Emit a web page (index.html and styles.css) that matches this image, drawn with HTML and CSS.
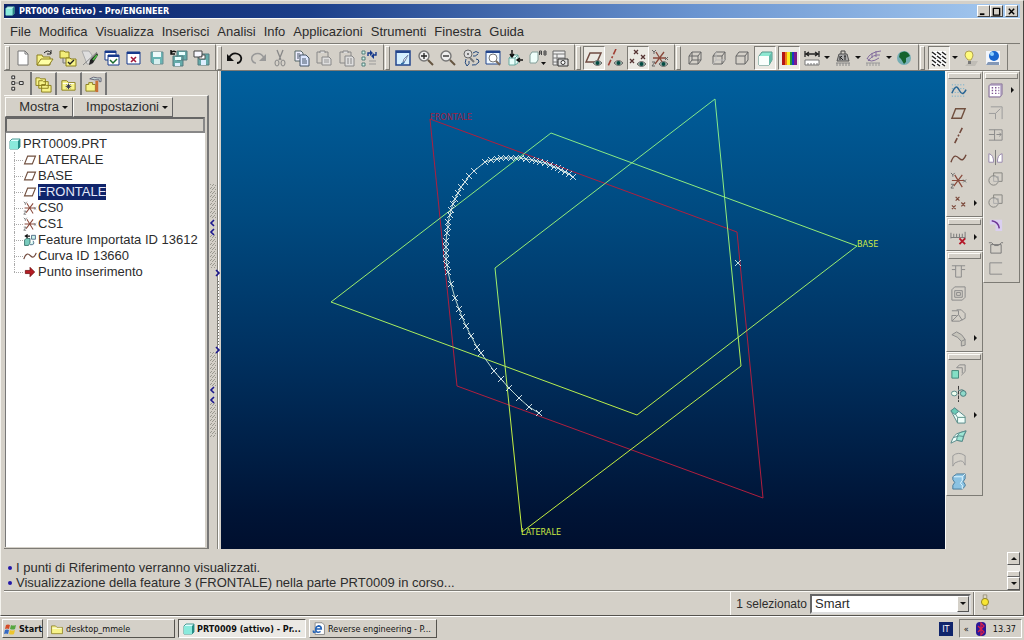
FILE: index.html
```html
<!DOCTYPE html>
<html lang="it">
<head>
<meta charset="utf-8">
<title>PRT0009 (attivo) - Pro/ENGINEER</title>
<link rel="stylesheet" href="styles.css">
</head>
<body>
<svg class="defs" aria-hidden="true">
  <symbol id="eye" viewBox="0 0 9 6"><path d="M0 3Q4.500-2 9 3Q4.500 8 0 3Z" fill="#a9bdb4" stroke="#666"/><circle cx="4.500" cy="3" r="2" fill="#054a42"/></symbol>
  <symbol id="cube" viewBox="0 0 12 12"><path d="M1 3l2-2h8v8l-2 2H1z" fill="#dff" stroke="#4a9a94"/><path d="M1 3h8v8H1z" fill="#8aeadc"/><path d="M9 3l2-2v8l-2 2z" fill="#268c86"/></symbol>
  <symbol id="plane" viewBox="0 0 18 18"><path d="M6 4h10l-4 10H2z" fill="none" stroke="#71503f" stroke-width="1.500"/></symbol>
  <symbol id="csys" viewBox="0 0 18 18"><path d="M2 9h13M5 3l8 13M13 3L4 15" stroke="#8a4a3c" stroke-width="1.300" fill="none"/><path d="M1 1l2 2 2-2M3 3v2M1 13h3l-3 4h3M14 8l3 3M17 8l-3 3" stroke="#666" fill="none"/></symbol>
  <symbol id="wave" viewBox="0 0 18 18"><path d="M1 13C4 4 7 6 10 9S15 10 17 5" fill="none" stroke="#70483b" stroke-width="1.500"/></symbol>
  <symbol id="xs" viewBox="0 0 18 18"><path d="M6 2l4 4M10 2L6 6M2 11l4 4M6 11l-4 4M12 8l4 4M16 8l-4 4" fill="none" stroke="#7c4a3c" stroke-width="1.300"/></symbol>
  <symbol id="folder" viewBox="0 0 18 18"><path d="M2 5h5l2 2h7v8H2z" fill="#f7f389" stroke="#8b7e1d"/><path d="M3 8h12" stroke="#fff"/></symbol>
  <symbol id="disk" viewBox="0 0 18 18"><path d="M3 3h12v12H5l-2-2z" fill="#6ab5b4" stroke="#6b8d92"/><path d="M5 3h8v5H5z" fill="#eefafa"/><path d="M6 10h6v5H6z" fill="#d6eeee"/></symbol>
  <symbol id="wirebox" viewBox="0 0 18 18"><path d="M3 7l3-4h9v8l-3 4H3zM3 7h9v8M12 7l3-4" fill="none" stroke="#666"/></symbol>
  <symbol id="circles" viewBox="0 0 18 18"><path d="M7 6V2h9v9h-4" fill="none" stroke="#858581"/><circle cx="7" cy="10" r="5" fill="none" stroke="#858581"/><path d="M7 6h5v5H7z" fill="none" stroke="#aaa"/></symbol>
</svg>

<div class="window">
  <header class="titlebar">
    <svg class="s12"><use href="#cube"/></svg>
    <h1>PRT0009 (attivo) - Pro/ENGINEER</h1>
    <div class="winbtns">
      <button aria-label="Riduci"><svg viewBox="0 0 10 10"><path d="M1 8h5" stroke="#000" stroke-width="2"/></svg></button>
      <button aria-label="Ingrandisci"><svg viewBox="0 0 10 10"><path d="M1 1.500h8M1.500 1v8h7V1" stroke="#000" fill="none" stroke-width="1.500"/></svg></button>
      <button class="close" aria-label="Chiudi"><svg viewBox="0 0 10 10"><path d="M2 2l6 6M8 2L2 8" stroke="#000" stroke-width="1.600"/></svg></button>
    </div>
  </header>

  <nav class="menu">
    <button>File</button><button>Modifica</button><button>Visualizza</button><button>Inserisci</button><button>Analisi</button><button>Info</button><button>Applicazioni</button><button>Strumenti</button><button>Finestra</button><button>Guida</button>
  </nav>

  <div class="toolbar">
    <div class="group g-file">
      <button aria-label="Nuovo"><svg viewBox="0 0 18 18"><path d="M4 2h7l3 3v11H4z" fill="#fff" stroke="#777"/><path d="M11 2v3h3" fill="none" stroke="#777"/></svg></button>
      <button aria-label="Apri"><svg viewBox="0 0 18 18"><path d="M1 6h5l1 2h7v8H1z" fill="#f7f389" stroke="#8b7e1d"/><path d="M1 16l4-6h12l-4 6z" fill="#ffffa4" stroke="#8b7e1d"/><path d="M8 4q4-4 7 0M15 1v4h-4" fill="none" stroke="#222"/></svg></button>
      <button aria-label="Cartella di lavoro"><svg viewBox="0 0 18 18"><path d="M1 2h4l1 1h4v6H1z" fill="#f3ed79" stroke="#8b7e1d"/><path d="M4 9v5h3" fill="none" stroke="#777"/><path d="M7 9h4l1 1h5v7H7z" fill="#f7f389" stroke="#8b7e1d"/><path d="M9 13l2 2 4-4" fill="none" stroke="#222" stroke-width="1.400"/></svg></button>
      <button aria-label="Cancella visualizzati"><svg viewBox="0 0 18 18"><path d="M1 2h7l3 4v9H6z" fill="#dedede" stroke="#aaa"/><path d="M2 16L16 3" stroke="#888"/><path d="M8 16l1-5 7-7 1 2-5 8z" fill="#222"/><path d="M12 11l4-5" stroke="#4db544" stroke-width="2"/></svg></button>
      <button aria-label="Attiva finestra"><svg viewBox="0 0 18 18"><path d="M2 2h11v9H2z" fill="#fff" stroke="#173a8c"/><path d="M2 3h11" stroke="#173a8c" stroke-width="2"/><path d="M5 6h11v10H5z" fill="#fff" stroke="#173a8c"/><path d="M5 7h11" stroke="#173a8c" stroke-width="2"/><path d="M7 11l3 3 4-4" fill="none" stroke="#176a2b" stroke-width="1.500"/></svg></button>
      <button aria-label="Chiudi finestra"><svg viewBox="0 0 18 18"><path d="M2 3h13v12H2z" fill="#fff" stroke="#173a8c"/><path d="M2 4h13" stroke="#173a8c" stroke-width="2"/><path d="M6 8l5 5M11 8l-5 5" stroke="#a31a3c" stroke-width="1.600"/></svg></button>
      <button aria-label="Salva"><svg><use href="#disk"/></svg></button>
      <button aria-label="Salva una copia"><svg viewBox="0 0 18 18"><path d="M7 2h10v9H7zM3 7h10v10H3z" fill="#65aaa9" stroke="#557a7e"/><path d="M9 3h6v3H9zM5 8h6v3H5z" fill="#e9ffff"/><path d="M5 14h5v3H5z" fill="#def"/><path d="M1 4q2-3 5-1M1 1v4h4" fill="none" stroke="#111" stroke-width="1.500"/></svg></button>
      <button aria-label="Backup"><svg viewBox="0 0 18 18"><path d="M6 5h11v11H6z" fill="#65aaa9" stroke="#557a7e"/><path d="M9 11h5v5H9z" fill="#def"/><path d="M2 2h8v6H2z" fill="#f8f8ff" stroke="#444"/><path d="M10 6h3v4H7V8h3z" fill="#fff" stroke="#555"/></svg></button>
    </div>
    <div class="group g-edit">
      <button aria-label="Annulla"><svg viewBox="0 0 18 18"><path d="M3 9C7 1 17 5 15 11Q14 14 11 14" fill="none" stroke="#111" stroke-width="1.800"/><path d="M1 5v7h7z" fill="#111"/></svg></button>
      <button aria-label="Ripeti"><svg viewBox="0 0 18 18"><path d="M15 9C11 1 1 5 3 11Q4 14 7 14" fill="none" stroke="#999" stroke-width="1.500"/><path d="M17 5v7h-7z" fill="#999"/></svg></button>
      <button aria-label="Taglia"><svg viewBox="0 0 18 18"><path d="M6 1l4 10M12 1L8 11" fill="none" stroke="#888" stroke-width="1.300"/><ellipse cx="6" cy="14" rx="2" ry="3" fill="none" stroke="#888"/><ellipse cx="12" cy="14" rx="2" ry="3" fill="none" stroke="#888"/></svg></button>
      <button aria-label="Copia"><svg viewBox="0 0 18 18"><path d="M2 2h6l2 2v8H2z" fill="#eef" stroke="#566"/><path d="M7 6h6l3 3v8H7z" fill="#dde7ff" stroke="#456"/><path d="M4 5h3M4 7h3M4 9h2M9 10h4M9 12h5M9 14h5" stroke="#456"/></svg></button>
      <button aria-label="Incolla"><svg viewBox="0 0 18 18"><path d="M2 3h11v11H2z" fill="none" stroke="#888"/><path d="M5 4V2h5v2M7 8h7l2 2v6H7z" fill="#ddd" stroke="#888"/><path d="M9 11h5M9 13h5" stroke="#999"/></svg></button>
      <button aria-label="Incolla speciale"><svg viewBox="0 0 18 18"><path d="M2 3h11v11H2z" fill="none" stroke="#888"/><path d="M5 4V2h5v2M7 7h7l2 2v8H7z" fill="#ddd" stroke="#888"/><path d="M9 10h2M12 10h2M9 12h2M12 12h2M9 14h2M12 14h2" stroke="#888"/></svg></button>
      <button aria-label="Rigenera"><svg viewBox="0 0 18 18"><path d="M2 2h3v3H2zM2 8h3v3H2zM2 14h3v3H2z" fill="#d3f5ec" stroke="#527d78"/><path d="M9 12h7M9 15h7" stroke="#999"/><path d="M8 7V4h3M16 3v3h-3" fill="none" stroke="#173a8c" stroke-width="1.400"/><path d="M10 1l3 3-3 3zM14 4l-3 3 3 3z" fill="#173a8c"/></svg></button>
    </div>
    <div class="group g-view">
      <button aria-label="Ridisegna"><svg viewBox="0 0 18 18"><path d="M2 2h14v14H2z" fill="#d4efff" stroke="#23468d" stroke-width="1.500"/><path d="M2 3h14" stroke="#23468d" stroke-width="2"/><path d="M7 15q3 0 4-5" fill="none" stroke="#2e69a3" stroke-width="1.500"/><path d="M14 6l-3 6-2 1 1-3z" fill="#fff" stroke="#78a"/></svg></button>
      <button aria-label="Ingrandisci vista"><svg viewBox="0 0 18 18"><circle cx="7" cy="7" r="5" fill="#eee" stroke="#777" stroke-width="1.400"/><path d="M4 7h6M7 4v6" stroke="#222" stroke-width="1.300"/><path d="M11 11l5 5" stroke="#655541" stroke-width="2"/></svg></button>
      <button aria-label="Riduci vista"><svg viewBox="0 0 18 18"><circle cx="7" cy="7" r="5" fill="#eee" stroke="#777" stroke-width="1.400"/><path d="M4 7h6" stroke="#222" stroke-width="1.300"/><path d="M11 11l5 5" stroke="#655541" stroke-width="2"/></svg></button>
      <button aria-label="Orientamento"><svg viewBox="0 0 18 18"><circle cx="6" cy="5" r="4" fill="#ddd" stroke="#666"/><circle cx="6" cy="5" r="1" fill="#555"/><path d="M8 9l4 4" stroke="#777" stroke-width="2"/><path d="M11 4q3-3 6 0M16 5q-3 3-5 2M4 10q-2 4 1 7M7 12q1 3-2 5M10 16q4 1 7-3M14 10q3 0 3 3" fill="none" stroke="#24487d"/></svg></button>
      <button aria-label="Riadatta"><svg viewBox="0 0 18 18"><path d="M2 2h14v13H2z" fill="#eef7ff" stroke="#23468d"/><path d="M2 3h14" stroke="#23468d" stroke-width="2"/><circle cx="9" cy="9" r="4" fill="#fff" stroke="#777"/><path d="M12 12l4 4" stroke="#765" stroke-width="2"/></svg></button>
      <button aria-label="Riorienta"><svg viewBox="0 0 18 18"><path d="M3 9l3-3h6v8l-3 2H3z" fill="#e9fffb" stroke="#68aaa0"/><path d="M3 9h6v7M9 9l3-3" fill="none" stroke="#68aaa0"/><path d="M6 1v7M4 5l2 3 2-3M17 11h-6M14 9l-3 2 3 2" fill="none" stroke="#111" stroke-width="1.400"/></svg></button>
      <button aria-label="Viste salvate"><svg viewBox="0 0 18 18"><path d="M1 6l2-3h6v8l-2 3H1z" fill="#effffb" stroke="#829e99"/><path d="M10.500 6V2h2v4M10 4h3M15 6V2h2v4zM15 4h2" fill="none" stroke="#444"/><path d="M12 13h5l-2.500 3z" fill="#111"/></svg></button>
      <button aria-label="Gestore viste"><svg viewBox="0 0 18 18"><path d="M2 2h12v14H2z" fill="#eee" stroke="#666"/><path d="M2 5h12M6 5v11M2 9h12M2 13h12" stroke="#777"/><path d="M7 10h10v7H7z" fill="#ddd" stroke="#333"/><circle cx="12" cy="13.500" r="2" fill="#fff" stroke="#333"/></svg></button>
    </div>
    <div class="group g-datum">
      <button class="on" aria-label="Mostra piani"><svg viewBox="0 0 18 18"><path d="M5 4h11l-4 9H1z" fill="none" stroke="#704b42" stroke-width="1.500"/><use href="#eye" x="8" y="11" width="9" height="6"/></svg></button>
      <button aria-label="Mostra assi"><svg viewBox="0 0 18 18"><path d="M9 0L1 17" stroke="#a13f35" stroke-width="1.600" stroke-dasharray="6 2 2 2"/><use href="#eye" x="7" y="11" width="9" height="6"/></svg></button>
      <button class="on" aria-label="Mostra punti"><svg viewBox="0 0 18 18"><path d="M5 1l4 4M9 1L5 5M1 10l4 4M5 10l-4 4M12 6l4 4M16 6l-4 4" stroke="#533" stroke-width="1.300"/><use href="#eye" x="8" y="12" width="9" height="6"/></svg></button>
      <button aria-label="Mostra sistemi"><svg viewBox="0 0 18 18"><use href="#csys"/><use href="#eye" x="8" y="12" width="9" height="6"/></svg></button>
    </div>
    <div class="group g-model">
      <button aria-label="Wireframe"><svg viewBox="0 0 18 18"><path d="M3 7l3-4h9v8l-3 4H3zM3 7h9v8M12 7l3-4M6 3v8h9M6 11l-3 4" fill="none" stroke="#666"/></svg></button>
      <button aria-label="Linea nascosta"><svg viewBox="0 0 18 18"><use href="#wirebox"/><path d="M6 3v8h9M6 11l-3 4" fill="none" stroke="#bbb"/></svg></button>
      <button aria-label="Nessuna nascosta"><svg><use href="#wirebox"/></svg></button>
      <button class="on" aria-label="Ombreggiatura"><svg viewBox="0 0 18 18"><path d="M3 7l3-4h10v8l-3 5H3z" fill="#8de8d2" stroke="#579489"/><path d="M3 7h10v9H3z" fill="#fafffd"/><path d="M13 7l3-4v8l-3 5z" fill="#67b9a9"/></svg></button>
      <button class="on" aria-label="Colori"><svg viewBox="0 0 18 18"><path fill="#b31414" d="M2 3h3v13H2z"/><path fill="#f17c17" d="M5 3h2v13H5z"/><path fill="#f9ed23" d="M7 3h3v13H7z"/><path fill="#249b34" d="M10 3h2v13h-2z"/><path fill="#1c38c4" d="M12 3h2v13h-2z"/><path fill="#7b1b8c" d="M14 3h3v13h-3z"/></svg></button>
      <button aria-label="Misura"><svg viewBox="0 0 18 18"><path d="M2 2v6M16 2v6M3 5h12M6 3L3 5l3 2M12 3l3 2-3 2" fill="none" stroke="#222" stroke-width="1.300"/><path d="M2 11h14v5H2z" fill="#fff" stroke="#777"/><path d="M5 14v2M8 14v2M11 14v2M14 14v2" stroke="#777"/></svg></button>
      <span class="arr down"></span>
      <button aria-label="Massa"><svg viewBox="0 0 18 18"><path d="M5 5h8l2 7H3z" fill="#aaa" stroke="#555"/><path d="M7 5V2h4v3" fill="none" stroke="#444"/><path d="M6 7v4M6 9l2-2M7 9l2 2M10 7h2M11 7v4" stroke="#222" fill="none"/><path d="M2 14h14M3 14v3M6 14v3M9 14v3M12 14v3M15 14v3" fill="none" stroke="#888"/></svg></button>
      <span class="arr down"></span>
      <button aria-label="Analisi curva"><svg viewBox="0 0 18 18"><path d="M3 10Q6 3 17 2M4 12Q9 5 16 6M3 9q3 6 12 0M8 4v5M12 2v6" fill="none" stroke="#826c9d"/><path d="M2 14h14M3 14v3M6 14v3M9 14v3M12 14v3M15 14v3" stroke="#999" fill="none"/></svg></button>
      <span class="arr down"></span>
      <button aria-label="Sito web"><svg viewBox="0 0 18 18"><circle cx="9" cy="9" r="7" fill="#75aeb5"/><path d="M5 4q5-3 8 0l2 3-4 2v4l-2 2-3-5-2-2z" fill="#14632e"/></svg></button>
    </div>
    <div class="group g-render">
      <button class="on" aria-label="Trama"><svg viewBox="0 0 18 18"><path fill="#fff" d="M2 2h14v15H2z"/><path d="M2 3l4 3M7 3l4 3M12 3l4 3M2 7l4 3M7 7l4 3M12 7l4 3M2 11l4 3M7 11l4 3M12 11l4 3M2 15l3 2M7 15l3 2M12 15l3 2" stroke="#222" stroke-width="1.500"/></svg></button>
      <span class="arr down"></span>
      <button aria-label="Luci"><svg viewBox="0 0 18 18"><path d="M9 12h8l-3 5H4z" fill="#c0bdb6"/><path d="M7 11q-3-3-3-5 0-4 4-4t4 4q0 2-2 5z" fill="#fffb7c" stroke="#b0a052"/><path d="M7 12h3v3H7z" fill="#777"/></svg></button>
      <button aria-label="Rendering"><svg viewBox="0 0 18 18"><path d="M2 2h14v14H2z" fill="#f2f6fc"/><path d="M4 13h11v3H2z" fill="#8398b7"/><circle cx="10" cy="7" r="5" fill="#1766ce"/><circle cx="8" cy="5" r="2" fill="#8ed1ff"/></svg></button>
    </div>
  </div>

  <main class="work">
    <aside class="side">
      <div class="tabs">
        <button class="cur" aria-label="Albero"><svg viewBox="0 0 18 18"><path d="M3 1h3v3H3zM3 7h3v3H3zM3 13h3v3H3zM11 7h4v3h-4z" fill="#eee" stroke="#222"/><path d="M6 8.500h5" stroke="#777"/></svg></button>
        <button aria-label="Cartelle"><svg viewBox="0 0 18 18"><path d="M1 2h4l1 1h5v7H1zM4 5h4l1 1h5v7H4zM7 9h4l1 1h5v7H7z" fill="#f7f389" stroke="#8b7e1d"/></svg></button>
        <button aria-label="Preferiti"><svg viewBox="0 0 18 18"><use href="#folder"/><path d="M9 8v6M6 11h6M7 9l4 4M11 9l-4 4" stroke="#335"/></svg></button>
        <button aria-label="Strumenti"><svg viewBox="0 0 18 18"><path d="M1 9h3V7h4v2h3v7H1z" fill="#f7f389" stroke="#8b7e1d"/><path d="M5 3q4-3 8-1h4v4h-2V4h-5z" fill="#c6d6d6" stroke="#667"/><path d="M11 5h3v12h-3z" fill="#c96f35"/></svg></button>
      </div>
      <div class="panel">
        <div class="cmds"><button class="c-show">Mostra<span class="arr down"></span></button><button class="c-set">Impostazioni<span class="arr down"></span></button></div>
        <div class="treehead"></div>
        <div class="treebox">
          <div class="root"><svg class="s12"><use href="#cube"/></svg>PRT0009.PRT</div>
          <ul class="tree">
            <li><svg><use href="#plane"/></svg><span>LATERALE</span></li>
            <li><svg><use href="#plane"/></svg><span>BASE</span></li>
            <li><svg><use href="#plane"/></svg><span class="sel">FRONTALE</span></li>
            <li><svg><use href="#csys"/></svg><span>CS0</span></li>
            <li><svg><use href="#csys"/></svg><span>CS1</span></li>
            <li><svg viewBox="0 0 18 18"><path d="M2 9l2-2h5v6l-2 3H2z" fill="#79cbbd" stroke="#28635d"/><path d="M11 3h5v5h-5zM9 15q7 1 4-5" fill="#cef5ed" stroke="#357"/><path d="M4 4h5M6 2L3 4l3 2" fill="none" stroke="#111" stroke-width="1.500"/></svg><span>Feature Importata ID 13612</span></li>
            <li><svg><use href="#wave"/></svg><span>Curva ID 13660</span></li>
            <li><svg viewBox="0 0 18 18"><path d="M3 7h6V3l6 6-6 6v-4H3z" fill="#b51c24" stroke="#701010"/></svg><span>Punto inserimento</span></li>
          </ul>
        </div>
      </div>
    </aside>

    <div class="splitter">
      <svg viewBox="0 0 12 478" aria-hidden="true">
        <defs><pattern id="hatch" width="3" height="4" patternUnits="userSpaceOnUse"><path d="M0 3l3-3" stroke="#99988f"/></pattern>
        <pattern id="dots" width="3" height="3" patternUnits="userSpaceOnUse"><path d="M0 0h1v1H0zM2 1h1v1H2z" fill="#77766f"/></pattern></defs>
        <path d="M8 0h1v478H8z" fill="#85837b"/><path d="M9 0h1v478H9z" fill="#fff"/>
        <path d="M1 113h6v84H1zM1 281h6v85H1z" fill="url(#hatch)"/>
        <path d="M8 208h3v66H8z" fill="url(#dots)"/>
        <path d="M1 148h6v16H1zM1 315h6v17H1z" fill="#d4d0c8"/>
        <path d="M5 149l-3 3 3 3M5 158l-3 3 3 3M5 316l-3 3 3 3M5 326l-3 3 3 3M7 199l3 3-3 3M7 276l3 3-3 3" fill="none" stroke="#1b178e" stroke-width="1.600"/>
      </svg>
    </div>

    <section class="canvas">
      <svg viewBox="221 71 724 478" role="img" aria-label="Vista modello">
        <defs>
          <linearGradient id="lime" gradientUnits="userSpaceOnUse" x1="0" y1="90" x2="0" y2="440"><stop offset="0" stop-color="#7ee890"/><stop offset=".5" stop-color="#9aee70"/><stop offset="1" stop-color="#c4ee40"/></linearGradient>
          <marker id="pt" viewBox="0 0 7 7" refX="3.500" refY="3.500" markerWidth="7" markerHeight="7" markerUnits="userSpaceOnUse"><path d="M.5.5l6 6M6.500.5l-6 6" stroke="#cfdfe3" stroke-width="1"/></marker>
        </defs>
        <g class="wire">
          <path class="red" d="M430 119L737 232L763 498L457 386Z"/>
          <path stroke="url(#lime)" d="M331 302L551 133L857 246L637 415Z"/>
          <path stroke="url(#lime)" d="M715 99L495 268L522 532L741 366Z"/>
        </g>
        <polyline class="pts" points="573,177 569,174 565,172 561,170 558,168 554,167 550,165 545,163 540,162 536,161 532,160 526,159 521,158 516,158 511,158 506,158 501,158 497,159 491,160 485,162 474,171 469,176 465,182 461,187 458,193 455,199 453,204 451,210 450,215 448,222 448,227 447,233 446,241 446,247 446,253 446,259 447,265 448,272 451,284 455,298 459,309 462,317 466,326 471,336 477,347 481,353 494,371 501,379 509,388 519,398 529,407 539,413"/>
        <path d="M735 260l6 6M741 260l-6 6" stroke="#bdd"/>
        <text x="430" y="120" class="redtext">FRONTALE</text>
        <text x="857" y="247" class="plabel">BASE</text>
        <text x="521" y="535" class="plabel">LATERALE</text>
      </svg>
    </section>

    <aside class="rail">
      <div class="vcol">
        <div class="vgroup v6">
          <button aria-label="Schizzo"><svg viewBox="0 0 18 18"><path d="M2 3h15M2 7h15M2 11h15M2 15h15" stroke="#58a7cf" stroke-dasharray="1 2"/><path d="M2 12C6 2 8 5 10 9s4 5 7-1" fill="none" stroke="#2a6593" stroke-width="1.600"/></svg></button>
          <button aria-label="Piano"><svg><use href="#plane"/></svg></button>
          <button aria-label="Asse"><svg viewBox="0 0 18 18"><path d="M13 1L5 17" stroke="#71483b" stroke-width="1.700" stroke-dasharray="6 2 2 2"/></svg></button>
          <button aria-label="Curva"><svg><use href="#wave"/></svg></button>
          <button aria-label="Sistema di coordinate"><svg><use href="#csys"/></svg></button>
          <button class="more" aria-label="Punti"><svg><use href="#xs"/></svg><span class="arr right"></span></button>
        </div>
        <div class="vgroup v1"><button class="more" aria-label="Annotazione"><svg viewBox="0 0 18 18"><path d="M1 4v6M4 5v4M7 5v4M10 5v4M13 5v4M16 3v8M1 9h15" stroke="#777"/><path d="M10 10l6 6M16 10l-6 6" stroke="#b41829" stroke-width="2"/></svg><span class="arr right"></span></button></div>
        <div class="vgroup v4">
          <button aria-label="Foro"><svg viewBox="0 0 18 18"><path d="M2 4h14M2 8h4v8h6V8h4M6 4v4M12 4v4" fill="none" stroke="#888"/></svg></button>
          <button aria-label="Guscio"><svg viewBox="0 0 18 18"><path d="M2 5l3-3h11v11l-3 3H2zM5 6h8v7H5zM7 8h4v3H7z" fill="none" stroke="#888"/></svg></button>
          <button aria-label="Nervatura"><svg viewBox="0 0 18 18"><path d="M2 4h7v4l-7 7h8l6-3V7l-4-4H7M9 8l4 6M2 15V9h5" fill="none" stroke="#888"/></svg></button>
          <button class="more" aria-label="Sformo"><svg viewBox="0 0 18 18"><path d="M2 5l5-3q6 2 9 8v6l-4 1v-5Q9 7 2 5z" fill="#c6c4bb" stroke="#888"/><path d="M12 12l4-2" stroke="#888"/></svg><span class="arr right"></span></button>
        </div>
        <div class="vgroup v6b">
          <button aria-label="Estrusione"><svg viewBox="0 0 18 18"><path d="M2 8h7v8H2z" fill="#83dfc5" stroke="#418678"/><path d="M7 5l3-3h6v7l-4 4M7 5h6v6" fill="none" stroke="#888"/></svg></button>
          <button aria-label="Rivoluzione"><svg viewBox="0 0 18 18"><path d="M9 1v17" stroke="#333" stroke-dasharray="4 1"/><ellipse cx="4.500" cy="9" rx="3" ry="2.500" fill="#efe" stroke="#588"/><ellipse cx="14" cy="9" rx="3" ry="3" fill="#8ed9ca" stroke="#477"/><path d="M9 6q4-2 6 0" fill="none" stroke="#477"/></svg></button>
          <button class="more" aria-label="Sweep"><svg viewBox="0 0 18 18"><path d="M1 4l4-3 11 9v7H8z" fill="#eefdf9" stroke="#588"/><path d="M8 17v-6h8M8 11L3 3" fill="none" stroke="#5a9187"/><path d="M1 4l4-3 4 4-4 3z" fill="#6acbb7" stroke="#588"/></svg><span class="arr right"></span></button>
          <button aria-label="Fusione"><svg viewBox="0 0 18 18"><path d="M1 15Q4 5 10 4l7-2q-3 6-4 11l-6-1z" fill="#effffb" stroke="#588"/><path d="M10 4q-3 3-3 8l6 1q1-7 4-11z" fill="#9de6d5" stroke="#588"/><path d="M4 9q6-3 11-1" fill="none" stroke="#588"/></svg></button>
          <button aria-label="Superficie"><svg viewBox="0 0 18 18"><path d="M3 14V5q6-5 13 0v10q-2-6-7-4-5 1-6 5z" fill="none" stroke="#999"/></svg></button>
          <button aria-label="Stile"><svg viewBox="0 0 18 18"><path d="M3 4l4-3h9v5l-2 3 2 3v2l-3 3H3v-4l2-3-2-3z" fill="#8bc2e2" stroke="#45799a"/><path d="M4 4h9l3-3M13 4v4l-2 3 2 2v4" fill="none" stroke="#e3f8ff"/></svg></button>
        </div>
      </div>
      <div class="vcol">
        <div class="vgroup v9">
          <button class="more" aria-label="Serie"><svg viewBox="0 0 18 18"><path d="M2 4l2-2h12v11l-2 3H2z" fill="#b5a5c6" stroke="#8d7a9c"/><path d="M3 4h11v11H3z" fill="#fff"/><path d="M5 6h8M5 9h8M5 12h8" stroke="#7e5693" stroke-width="1.500" stroke-dasharray="1.500 2"/></svg><span class="arr right"></span></button>
          <button aria-label="Taglia superficie"><svg viewBox="0 0 18 18"><path d="M4 3h12v13M2 10h7v6M9 10l5-5" fill="none" stroke="#999"/></svg></button>
          <button aria-label="Estendi"><svg viewBox="0 0 18 18"><path d="M2 4h14v11H2M2 9h6M8 4v11M10 9h5M13 7l2 2-2 2" fill="none" stroke="#888"/></svg></button>
          <button aria-label="Specchio"><svg viewBox="0 0 18 18"><path d="M9 1v16" stroke="#777"/><path d="M2 14V5q5 1 5 9zM16 14V5q-5 1-5 9z" fill="#fff" stroke="#9787ac"/></svg></button>
          <button aria-label="Unisci"><svg><use href="#circles"/></svg></button>
          <button aria-label="Interseca"><svg><use href="#circles"/></svg></button>
          <button aria-label="Raccordo"><svg viewBox="0 0 18 18"><path d="M3 4h13v12H9V9H3z" fill="#dacff0"/><path d="M5 5q7 1 8 8" fill="none" stroke="#6e3795" stroke-width="1.700"/></svg></button>
          <button aria-label="Offset"><svg viewBox="0 0 18 18"><path d="M4 7h11v9H4zM2 5h3l3 3h4l3-3h2" fill="none" stroke="#777"/></svg></button>
          <button aria-label="Riempi"><svg viewBox="0 0 18 18"><path d="M16 3H3v12h13" fill="none" stroke="#888"/></svg></button>
        </div>
      </div>
    </aside>
  </main>

  <section class="messages">
    <ul><li>I punti di Riferimento verranno visualizzati.</li><li>Visualizzazione della feature 3 (FRONTALE) nella parte PRT0009 in corso...</li></ul>
    <div class="scroll"><button aria-label="Su"><span class="arr up"></span></button><span class="track"><i></i></span><button aria-label="Giù"><span class="arr down"></span></button></div>
  </section>

  <footer class="status">
    <div class="pick"><label for="filter">1 selezionato</label><span class="drop"><select id="filter"><option>Smart</option></select><span class="dropbtn"><span class="arr down"></span></span></span></div>
    <div class="lamp"><svg viewBox="0 0 18 18"><path d="M7 1h4v4H7zM7 13h4v4H7z" fill="#ddd8c8" stroke="#99917a"/><circle cx="9" cy="9" r="4" fill="#f8e633" stroke="#8c7d24"/></svg></div>
  </footer>
</div>

<nav class="taskbar">
  <button class="start"><svg viewBox="0 0 14 14"><path d="M2 3q2-1 4 0L5 7Q3 6 1 7z" fill="#d54b26"/><path d="M7 3q2 1 5 0l-1 4Q9 8 6 7z" fill="#55a641"/><path d="M1 8q2-1 4 0l-1 4q-2-1-4 0z" fill="#3569c3"/><path d="M6 8q2 1 5 0l-1 4q-2 1-5 0z" fill="#edc52d"/></svg>Start</button>
  <button class="task"><svg><use href="#folder"/></svg><span>desktop_mmele</span></button>
  <button class="task active"><svg class="s12"><use href="#cube"/></svg><span>PRT0009 (attivo) - Pr...</span></button>
  <button class="task"><svg viewBox="0 0 18 18"><path d="M4 1h9l3 3v12H4z" fill="#fff" stroke="#777"/><path d="M11 12q-4 3-6-1-1-5 3-6 4 0 4 4H5M2 11q-1 4 4 1" fill="none" stroke="#2463b6" stroke-width="2"/></svg><span>Reverse engineering - P...</span></button>
  <span class="lang">IT</span>
  <div class="tray"><span>«</span><svg viewBox="0 0 12 14"><rect x="1" width="10" height="14" rx="4" fill="#2b1797"/><path d="M3 4l6 6-3 3V1l3 3-6 6" fill="none" stroke="#d6204b" stroke-width="1.300"/></svg><time>13.37</time></div>
</nav>
</body>
</html>
```
FILE: styles.css
```css
:root {
  --face: #d4d0c8;
  --dark: #7d7b75;
  --light: #fbfaf6;
  --ui: "Liberation Sans", Arial, sans-serif;
  --sys: "DejaVu Sans Condensed", "DejaVu Sans", sans-serif;
}
* { box-sizing: border-box; }
body {
  margin: 0;
  height: 100vh;
  display: flex;
  flex-direction: column;
  background: var(--face);
  color: #2c2c2c;
  font: 13px/16px var(--ui);
  overflow: hidden;
}
button {
  margin: 0;
  padding: 0;
  border: 0;
  background: none;
  color: inherit;
  font: inherit;
}
svg { display: block; width: 18px; height: 18px; flex: none; }
svg.s12 { width: 12px; height: 12px; }
svg.defs { position: absolute; width: 0; height: 0; }

.arr { display: block; flex: none; width: 0; height: 0; border: 3px solid transparent; }
.arr.down { border-top-color: #111; border-bottom: 0; }
.arr.up { border-bottom-color: #111; border-top: 0; }
.arr.right { border-left-color: #111; border-right: 0; }

.window {
  flex: 1;
  min-height: 0;
  display: flex;
  flex-direction: column;
  padding: 3px 3px 0 3px;
  border-top: 1px solid #e8e6df;
  border-left: 1px solid #f4f3ee;
  border-right: 1px solid #45443f;
  border-bottom: 1px solid #55534e;
}

/* title bar */
.titlebar {
  flex: none;
  height: 14px;
  display: flex;
  align-items: center;
  gap: 4px;
  padding: 0 2px 0 1px;
  background: linear-gradient(90deg, #0b2369, #1c3f8a 30%, #6a94d0 68%, #a6caf0);
}
.titlebar h1 { margin: 0; flex: 1; color: #fff; font: bold 9px/14px var(--sys); }
.titlebar .s12 { width: 10px; height: 10px; }
.winbtns { display: flex; }
.winbtns button {
  width: 13px;
  height: 12px;
  display: grid;
  place-items: center;
  background: var(--face);
  border: 1px solid;
  border-color: #fff #444 #444 #fff;
}
.winbtns .close { margin-left: 2px; }
.winbtns svg { width: 9px; height: 9px; }

/* menu */
.menu {
  flex: none;
  height: 26px;
  display: flex;
  align-items: center;
  gap: 8px;
  padding: 1px 6px 0;
  border-top: 1px solid var(--light);
  border-bottom: 1px solid var(--dark);
}

/* toolbar */
.toolbar { flex: none; height: 27px; display: flex; border-bottom: 1px solid var(--dark); }
.group {
  display: flex;
  align-items: center;
  justify-content: space-between;
  padding: 0 3px 0 1px;
  border-top: 1px solid var(--light);
  border-right: 1px solid var(--dark);
}
.group::before {
  content: "";
  width: 3px;
  height: 22px;
  margin-right: 2px;
  border: 1px solid;
  border-color: var(--light) var(--dark) var(--dark) var(--light);
}
.group button { width: 22px; height: 24px; display: grid; place-items: center; border: 1px solid transparent; }
.group button.on { background: #ebe9e3; border-color: var(--dark) #fff #fff var(--dark); }
.g-file { flex: 0 0 212px; }
.g-edit { flex: 0 0 168px; }
.g-view { flex: 0 0 191px; }
.g-datum { flex: 0 0 100px; }
.g-model { flex: 0 0 244px; }
.g-render { flex: 0 0 89px; }

/* work area */
.work { flex: 1; min-height: 0; display: flex; }
.side { flex: 0 0 205px; display: flex; flex-direction: column; }
.tabs { flex: none; height: 24px; display: flex; padding-top: 1px; }
.tabs button { width: 25px; display: grid; place-items: center; border-right: 2px solid #777; border-top: 1px solid var(--light); }
.tabs .cur { width: 28px; border-top: 0; }
.tabs svg { width: 17px; height: 17px; }
.panel {
  flex: 1;
  min-height: 0;
  display: flex;
  flex-direction: column;
  padding: 1px 2px 1px 1px;
  border-top: 1px solid var(--light);
  border-right: 2px solid #777;
  border-bottom: 1px solid var(--dark);
}
.cmds { display: flex; height: 20px; }
.cmds button {
  display: flex;
  align-items: center;
  justify-content: flex-end;
  gap: 3px;
  padding-right: 4px;
  border: 1px solid;
  border-color: var(--light) #666 #666 var(--light);
}
.c-show { width: 68px; }
.c-set { width: 100px; }
.treehead { height: 16px; border: 2px solid; border-color: #666 #888 #888 #666; }
.treebox { flex: 1; padding: 3px 0 0 3px; background: #fff; border-left: 1px solid #777; }
.root { display: flex; align-items: center; gap: 2px; }
.tree { list-style: none; margin: 0 0 0 5px; padding: 0; }
.tree li { position: relative; display: flex; align-items: center; height: 16px; padding-left: 9px; gap: 1px; white-space: nowrap; }
.tree li::before { content: ""; position: absolute; left: 0; top: 0; height: 16px; border-left: 1px dotted #aaa; }
.tree li:last-child::before { height: 8px; }
.tree li::after { content: ""; position: absolute; left: 0; top: 8px; width: 9px; border-top: 1px dotted #aaa; }
.tree svg { width: 14px; height: 14px; }
.tree .sel { background: #10246b; color: #e3e8fa; }
.splitter { flex: 0 0 12px; }
.splitter svg { width: 12px; height: 100%; }
.canvas { flex: 1; min-width: 0; background: linear-gradient(#00609e, #004a80 30%, #00305f 60%, #001436 92%, #000f2e); }
.canvas svg { width: 100%; height: 100%; }
.wire { fill: none; stroke-width: 1; }
.wire .red { stroke: #b01f3e; }
.pts { fill: none; stroke: #b9d6cf; stroke-width: 1; marker: url(#pt); }
.plabel { font: 9px "DejaVu Sans Condensed", sans-serif; fill: #cdea45; }
.redtext { font: 9px "DejaVu Sans Condensed", sans-serif; fill: #a01f42; }

/* right rail */
.rail { flex: none; display: flex; align-items: flex-start; border-left: 1px solid var(--light); }
.vcol { width: 37px; }
.vgroup {
  display: flex;
  flex-direction: column;
  justify-content: space-between;
  padding: 1px 1px 2px;
  border: 1px solid;
  border-color: var(--light) var(--dark) var(--dark) var(--light);
}
.vgroup::before { content: ""; height: 4px; border: 1px solid; border-color: var(--light) var(--dark) var(--dark) var(--light); }
.vgroup button { height: 22px; display: flex; align-items: center; gap: 7px; padding-left: 2px; }
.vgroup svg { width: 17px; height: 17px; }
.v6 { height: 146px; }
.v1 { height: 34px; }
.v4 { height: 101px; }
.v6b { height: 144px; }
.v9 { height: 212px; }

/* messages */
.messages { flex: none; height: 42px; display: flex; justify-content: space-between; border-bottom: 1px solid var(--dark); }
.messages ul { list-style: none; margin: 0; padding: 11px 0 0 4px; line-height: 15px; }
.messages li { display: flex; align-items: center; gap: 4px; }
.messages li::before { content: ""; width: 4px; height: 4px; border-radius: 50%; background: #2318a8; }
.scroll { width: 13px; display: flex; flex-direction: column; padding-top: 3px; }
.scroll button {
  height: 13px;
  display: grid;
  place-items: center;
  border: 1px solid;
  border-color: #fff #555 #555 #fff;
}
.track { flex: 1; display: flex; flex-direction: column; justify-content: flex-end; background: #eae8e3; }
.track i { height: 6px; background: var(--face); border: 1px solid; border-color: #fff #666 #666 #fff; }

/* status */
.status { flex: none; height: 24px; display: flex; justify-content: flex-end; border-top: 1px solid var(--light); }
.pick { display: flex; align-items: center; gap: 3px; padding: 0 2px 0 5px; border-left: 1px solid var(--light); border-right: 1px solid var(--dark); }
.pick label { font-size: 12px; white-space: nowrap; }
.drop { position: relative; display: block; width: 161px; height: 20px; }
.drop select {
  appearance: none;
  width: 100%;
  height: 100%;
  padding: 0 18px 0 3px;
  border: 2px solid;
  border-color: #666 #ddd #ddd #666;
  border-radius: 0;
  background: #fff;
  color: #2c2c2c;
  font: 13px/16px var(--ui);
}
.dropbtn {
  position: absolute;
  right: 2px;
  top: 2px;
  bottom: 2px;
  width: 12px;
  display: grid;
  place-items: center;
  background: var(--face);
  border: 1px solid;
  border-color: #fff #555 #555 #fff;
  pointer-events: none;
}
.lamp { width: 46px; padding: 2px 0 0 1px; border-left: 1px solid var(--light); }
.lamp svg { height: 16px; }

/* taskbar */
.taskbar {
  flex: none;
  height: 24px;
  display: flex;
  align-items: center;
  gap: 3px;
  padding: 0 2px 0 2px;
  border-top: 1px solid #fff;
  color: #111;
  font: 9px/14px var(--sys);
}
.taskbar button {
  height: 19px;
  display: flex;
  align-items: center;
  gap: 3px;
  padding: 0 3px;
  border: 1px solid;
  border-color: #fff #55534e #55534e #fff;
  white-space: nowrap;
}
.taskbar .start { width: 41px; gap: 1px; padding: 0 1px; font-weight: bold; margin-right: 1px; }
.taskbar button svg { width: 14px; height: 14px; }
.taskbar .task { flex: 0 1 128px; padding: 0 1px 0 2px; gap: 2px; }
.taskbar .task.active { background: #ebe9e4; border-color: #55534e #fff #fff #55534e; font-weight: bold; padding-left: 4px; }
.taskbar .active svg.s12 { width: 12px; height: 12px; }
.lang { margin-left: auto; width: 14px; height: 14px; background: #10246b; color: #fff; text-align: center; }
.tray {
  display: flex;
  align-items: center;
  gap: 6px;
  height: 19px;
  margin-left: 3px;
  padding: 0 5px 0 4px;
  border: 1px solid;
  border-color: var(--dark) #fff #fff var(--dark);
}
.tray svg { width: 12px; height: 14px; }
```
